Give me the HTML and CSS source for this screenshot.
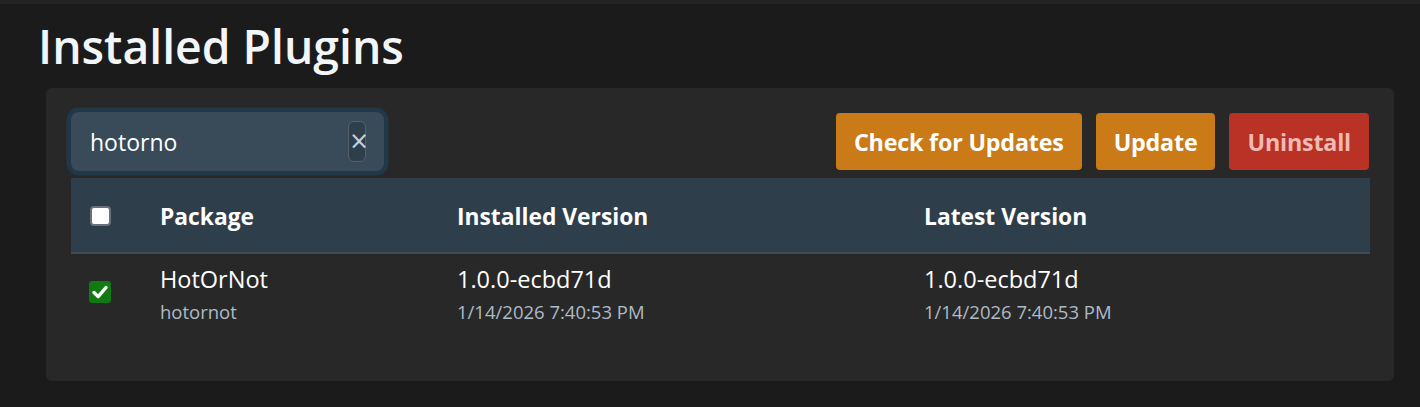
FILE: index.html
```html
<!DOCTYPE html>
<html lang="en">
<head>
<meta charset="utf-8">
<title>Installed Plugins</title>
<link rel="stylesheet" href="styles.css">
</head>
<body>
<div class="topstrip"></div>
<main class="page">
  <h1 class="title">Installed Plugins</h1>
  <section class="card">
    <div class="toolbar">
      <div class="search">
        <input class="search-input" type="text" value="hotorno">
        <button class="clear" type="button">&#xD7;</button>
      </div>
      <div class="actions">
        <button class="btn btn-warn" type="button">Check for Updates</button>
        <button class="btn btn-warn" type="button">Update</button>
        <button class="btn btn-danger" type="button">Uninstall</button>
      </div>
    </div>
    <div class="table">
      <div class="thead">
        <div class="cell cell-check"><span class="box"></span></div>
        <div class="cell">Package</div>
        <div class="cell">Installed Version</div>
        <div class="cell">Latest Version</div>
      </div>
      <div class="trow">
        <div class="cell cell-check">
          <span class="box box-on">
            <svg viewBox="0 0 22 22" width="22" height="22"><path d="M5 11.5 L9.2 15.6 L17 6.5" fill="none" stroke="#fff" stroke-width="3.4" stroke-linecap="round" stroke-linejoin="round"/></svg>
          </span>
        </div>
        <div class="cell">
          <div class="main">HotOrNot</div>
          <div class="sub">hotornot</div>
        </div>
        <div class="cell">
          <div class="main">1.0.0-ecbd71d</div>
          <div class="sub">1/14/2026 7:40:53 PM</div>
        </div>
        <div class="cell">
          <div class="main">1.0.0-ecbd71d</div>
          <div class="sub">1/14/2026 7:40:53 PM</div>
        </div>
      </div>
    </div>
  </section>
</main>
</body>
</html>
```

FILE: styles.css
```css
* { box-sizing: border-box; }

html, body {
  margin: 0;
  background: #1b1b1b;
  color: #f2f5f8;
  font-family: "Open Sans", "Noto Sans", sans-serif;
}

.topstrip {
  height: 4px;
  background: #232323;
}

.page {
  padding: 0 26px 0 38px;
}

.title {
  margin: 15px 0 0 0;
  font-size: 46.3px;
  font-weight: 600;
  line-height: 1.2;
  color: #f3f6f9;
  height: 69px;
}

.card {
  margin-left: 8px;
  background: #282828;
  border-radius: 6px;
  padding: 24px 24px 24px 25px;
}

.toolbar {
  display: flex;
  align-items: center;
  justify-content: space-between;
  height: 59px;
}

.search {
  display: flex;
  align-items: center;
  width: 313px;
  height: 59px;
  padding: 0 18px 0 19px;
  background: #394a58;
  border-radius: 8px;
  box-shadow: 0 0 0 4.5px #213848;
}

.search-input {
  flex: 1;
  min-width: 0;
  border: 0;
  outline: none;
  background: transparent;
  color: #ffffff;
  font-family: "Open Sans", "Noto Sans", sans-serif;
  font-size: 23px;
  padding: 0;
}

.clear {
  width: 18px;
  height: 41px;
  padding: 0 0 2px 0;
  border: 1px solid #56606a;
  border-radius: 6px;
  background: #2f3e4b;
  color: #c9cfd5;
  font-size: 24px;
  font-weight: 400;
  font-family: "DejaVu Sans", sans-serif;
  line-height: 1;
}

.actions {
  display: flex;
  gap: 14px;
  align-items: center;
  margin-right: 1px;
}

.btn {
  height: 57px;
  padding: 0 18px;
  border: 0;
  border-radius: 4px;
  font-family: "Open Sans", "Noto Sans", sans-serif;
  font-size: 23.3px;
  font-weight: 700;
  color: #ffffff;
  letter-spacing: -0.2px;
}

.btn-warn { background: #ca7a17; }

.btn-danger {
  background: #ba3226;
  color: #eebab4;
}

.table {
  margin-top: 7px;
  margin-bottom: 21px;
}

.thead, .trow {
  display: grid;
  grid-template-columns: 69px 297px 467px 1fr;
}

.thead {
  height: 76px;
  background: #2f3e4b;
  border-bottom: 2px solid #3d4b57;
  align-items: center;
  font-size: 22.8px;
  font-weight: 700;
  line-height: 33px;
  color: #ffffff;
}

.thead .cell { padding-top: 2px; }

.cell { padding-left: 20px; }

.cell-check { padding-left: 19px; display: flex; }

.box {
  display: inline-flex;
  width: 21px;
  height: 20px;
  background: #ffffff;
  border: 2px solid #6b7178;
  border-radius: 4px;
}

.trow {
  padding: 10px 0 10px 0;
  align-items: start;
}

.trow .cell-check { padding-left: 18px; padding-top: 17px; }

.box-on {
  width: 22px;
  height: 22px;
  background: #127a12;
  border: 0;
  border-radius: 3px;
}

.main {
  font-size: 23.5px;
  line-height: 30px;
  color: #ffffff;
}

.sub {
  margin-top: 4px;
  font-size: 18.5px;
  line-height: 28px;
  color: #adbbc6;
}
```
